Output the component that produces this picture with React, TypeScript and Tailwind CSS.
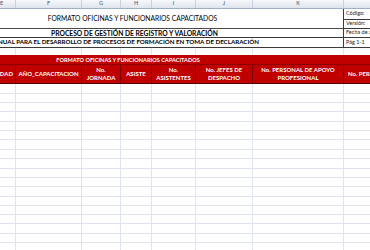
const cols = [
  { key: "E", w: "w-[28px]" },
  { key: "F", w: "w-[66px]" },
  { key: "G", w: "w-[39px]" },
  { key: "H", w: "w-[31px]" },
  { key: "I", w: "w-[44px]" },
  { key: "J", w: "w-[57px]" },
  { key: "K", w: "w-[91px]" },
  { key: "L", w: "w-[60px]" },
];

const headers = [
  ["CIUDAD"],
  ["AÑO_CAPACITACION"],
  ["No.", "JORNADA"],
  ["ASISTE"],
  ["No.", "ASISTENTES"],
  ["No. JEFES DE", "DESPACHO"],
  ["No. PERSONAL DE APOYO", "PROFESIONAL"],
  ["No. PERSONAL"],
];

// alturas de fila tal como las pinta Excel al zoom de la captura
const rowHeights = [
  "h-[10px]", "h-[9px]", "h-[9px]", "h-[10px]", "h-[9px]", "h-[9px]", "h-[10px]", "h-[9px]",
  "h-[10px]", "h-[9px]", "h-[9px]", "h-[10px]", "h-[9px]", "h-[9px]", "h-[9px]", "h-[10px]",
  "h-[9px]", "h-[9px]",
];

function GridRow({ h }: { h: string }) {
  return (
    <div className={`flex ${h} border-b border-[#dfe3ee] shrink-0`}>
      {cols.map((c) => (
        <div key={c.key} className={`${c.w} shrink-0 border-r border-[#dfe3ee]`} />
      ))}
    </div>
  );
}

export default function App() {
  return (
    <div className="w-[370px] h-[250px] overflow-hidden bg-white font-['Lato',sans-serif] text-black">
      <div className="-ml-[12px] w-[404px] flex flex-col">
        {/* letras de columna */}
        <div className="flex h-[9px] border-b border-[#9fb0c4] bg-gradient-to-b from-[#f6f8fb] to-[#dfe5ee]">
          {cols.map((c) => (
            <div
              key={c.key}
              className={`${c.w} shrink-0 border-r border-[#c9d3e0] flex items-center justify-center text-[5.5px] leading-none text-[#40506a]`}
            >
              {c.key === "L" ? "" : c.key}
            </div>
          ))}
        </div>

        {/* encabezado del formato */}
        <div className="flex">
          <div className="w-[356px] shrink-0 flex flex-col border-r border-[#3a3a3a]">
            <div className="h-[20px] border-b border-[#4a4a4a] flex items-center justify-center pl-[12px] pr-[78px] text-[6.7px] leading-none whitespace-nowrap">
              FORMATO OFICINAS Y FUNCIONARIOS CAPACITADOS
            </div>
            <div className="h-[9px] border-b border-[#3a3a3a] flex items-center justify-center pl-[12px] pr-[74px] text-[6.7px] font-bold leading-none whitespace-nowrap">
              PROCESO DE GESTIÓN DE REGISTRO Y VALORACIÓN
            </div>
            <div className="h-[10px] border-b border-[#3a3a3a] flex items-center justify-center pl-[12px] pr-[96px] text-[6.2px] font-bold leading-none whitespace-nowrap">
              MANUAL PARA EL DESARROLLO DE PROCESOS DE FORMACIÓN EN TOMA DE DECLARACIÓN
            </div>
          </div>
          <div className="w-[48px] shrink-0 flex flex-col text-[5.5px] leading-none text-[#222]">
            <div className="h-[11px] border-b border-[#3a3a3a] flex items-center pl-[2px] whitespace-nowrap">Código:</div>
            <div className="h-[9px] border-b border-[#3a3a3a] flex items-center pl-[2px] whitespace-nowrap">Versión:</div>
            <div className="h-[9px] border-b border-[#3a3a3a] flex items-center pl-[2px] whitespace-nowrap">Fecha de aprobación:</div>
            <div className="h-[10px] border-b border-[#3a3a3a] flex items-center pl-[2px] whitespace-nowrap">Pág 1-1</div>
          </div>
        </div>

        <GridRow h="h-[8px]" />

        {/* bloque rojo */}
        <div className="h-[10px] -mt-px bg-[#c00000] border-b border-[#8c0000] flex items-center justify-center pl-[12px] pr-[136px] text-[5.6px] font-bold leading-none text-white whitespace-nowrap">
          FORMATO OFICINAS Y FUNCIONARIOS CAPACITADOS
        </div>
        <div className="flex h-[19px] bg-[#c00000] border-b border-[#5a0000]">
          {cols.map((c, i) => (
            <div
              key={c.key}
              className={`${c.w} shrink-0 border-r border-[#7a0000] flex flex-col items-center justify-center text-[6px] font-bold leading-[8.5px] text-white whitespace-nowrap overflow-hidden ${i === 0 ? "items-end pr-[2px]" : ""} ${i === 7 ? "items-start pl-[4px]" : ""}`}
            >
              {headers[i].map((t) => (
                <span key={t}>{t}</span>
              ))}
            </div>
          ))}
        </div>

        {rowHeights.map((h, i) => (
          <GridRow key={i} h={h} />
        ))}
      </div>
    </div>
  );
}
